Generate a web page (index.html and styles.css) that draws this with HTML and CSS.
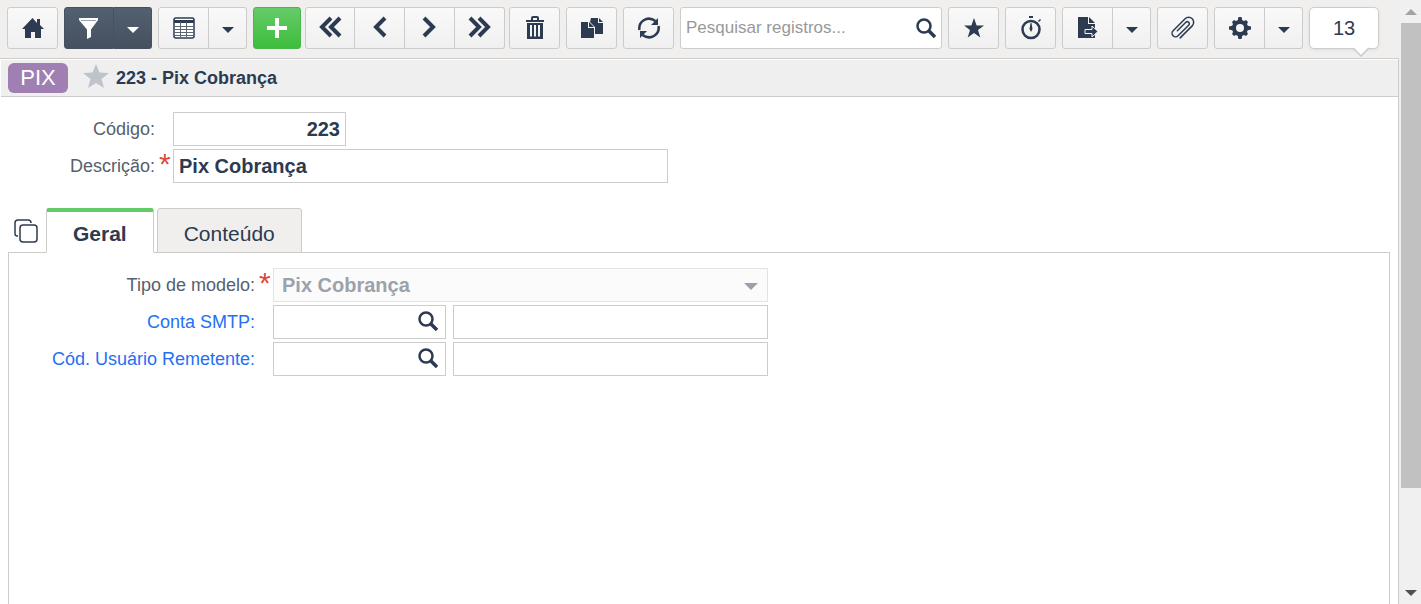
FILE: index.html
```html
<!DOCTYPE html>
<html lang="pt-BR">
<head>
  <meta charset="UTF-8">
  <meta name="viewport" content="width=device-width, initial-scale=1.0">
  <title>223 - Pix Cobrança</title>
  <link rel="stylesheet" href="styles.css">
</head>
<body>

  <div class="page">

    <!-- Toolbar -->
    <header class="toolbar">
      <div class="btn-group">
        <button class="btn" type="button" aria-label="Início">
          <svg width="22" height="22" viewBox="0 0 22 22"><path d="M10.500 1L0 12h3v9h6v-6h4v6h6v-9h3l-4-4V2h-3v4z"/></svg>
        </button>
      </div>

      <div class="btn-group dark">
        <button class="btn" type="button" aria-label="Filtro">
          <svg width="20" height="22" viewBox="0 0 20 22"><path d="M0 1h19v2L12 12.500v7.500l-4 2v-9.500L0 3z"/><path d="M2 3.500h15" stroke="#9ba3ad"/></svg>
        </button>
        <button class="btn caret" type="button" aria-label="Opções de filtro">
          <svg width="12" height="6" viewBox="0 0 12 6"><path d="M0 0h12L6 6z"/></svg>
        </button>
      </div>

      <div class="btn-group">
        <button class="btn" type="button" aria-label="Grade">
          <svg width="22" height="22" viewBox="0 0 22 22"><rect x="1" y="1" width="20" height="20" rx="2" fill="#fff" stroke="#2c3b50" stroke-width="1.500"/><path d="M1 3h20v3H1z"/><path d="M2 9.500h18M2 12.500h18M2 15.500h18M2 18.500h18M7.500 5v15M13.500 5v15" stroke="#59667a"/></svg>
        </button>
        <button class="btn caret" type="button" aria-label="Opções da grade">
          <svg width="12" height="6" viewBox="0 0 12 6"><path d="M0 0h12L6 6z"/></svg>
        </button>
      </div>

      <div class="record-actions">
        <button class="btn add" type="button" aria-label="Novo">
          <svg width="22" height="22" viewBox="0 0 22 22"><path d="M9 1h4v8h8v4h-8v8H9v-8H1V9h8z"/></svg>
        </button>

        <div class="btn-group">
          <button class="btn nav" type="button" aria-label="Primeiro">
            <svg width="24" height="22" viewBox="0 0 24 22"><path class="chevron" d="M13 2L4 11l9 9M22 2l-9 9 9 9"/></svg>
          </button>
          <button class="btn nav" type="button" aria-label="Anterior">
            <svg width="24" height="22" viewBox="0 0 24 22"><path class="chevron" d="M17 2l-9 9 9 9"/></svg>
          </button>
          <button class="btn nav" type="button" aria-label="Próximo">
            <svg width="24" height="22" viewBox="0 0 24 22"><path class="chevron" d="M6 2l9 9-9 9"/></svg>
          </button>
          <button class="btn nav" type="button" aria-label="Último">
            <svg width="24" height="22" viewBox="0 0 24 22"><path class="chevron" d="M2 2l9 9-9 9M11 2l9 9-9 9"/></svg>
          </button>
        </div>

        <button class="btn single" type="button" aria-label="Excluir">
          <svg width="18" height="24" viewBox="0 0 18 24"><path d="M5 4V2q0-2 2-2h4q2 0 2 2v2h5v2H0V4zM7 4h4V2H7zM1 7h16v16H1zM4 9v11.500h2V9zM8 9v11.500h2V9zM12 9v11.500h2V9z" fill-rule="evenodd"/></svg>
        </button>
      </div>

      <button class="btn single" type="button" aria-label="Duplicar">
        <svg width="22" height="22" viewBox="0 0 22 22"><path d="M10 1h7v5h5v11h-8V10L9 5z"/><path d="M18 1l4 4h-4z"/><path d="M0 5h7v6h6v10H0z"/><path d="M8 5l5 5H8z"/></svg>
      </button>

      <button class="btn single" type="button" aria-label="Atualizar">
        <svg width="24" height="24" viewBox="0 0 24 24"><path class="arc" d="M2.500 14C1 6 10-1 18.500 5M21.500 10C23 18 14 25 5.500 19"/><path d="M21 2v7h-7zM3 22v-7h7z"/></svg>
      </button>

      <div class="search">
        <input type="text" class="search-input" aria-label="Pesquisar registros" placeholder="Pesquisar registros...">
        <button class="search-btn" type="button" aria-label="Pesquisar">
          <svg width="20" height="20" viewBox="0 0 20 20"><circle class="lens" cx="8" cy="8" r="6.500"/><path class="handle" d="M13 13l6 6"/></svg>
        </button>
      </div>

      <button class="btn single" type="button" aria-label="Favoritos">
        <svg width="22" height="22" viewBox="0 0 22 22"><path d="M11 1l2.600 7.400H21l-6 4.600 2.300 7.500L11 16l-6.300 4.500L7 13 1 8.400h7.400z"/></svg>
      </button>

      <button class="btn single" type="button" aria-label="Tempo">
        <svg width="22" height="24" viewBox="0 0 22 24"><circle cx="11" cy="13.500" r="8.500" fill="none" stroke="#2c3b50" stroke-width="2.500"/><path d="M9 0h4v2H9zM18 5l2-2 1 1-2 2zM10.500 7h1l1 6-1.500 3L9.500 13z"/></svg>
      </button>

      <div class="btn-group">
        <button class="btn" type="button" aria-label="Exportar">
          <svg width="22" height="22" viewBox="0 0 22 22"><path d="M1 0h10v7h7v14H1z"/><path d="M12 0l6 6h-6z"/><path d="M8 12.500h7V9l6 5.500-6 5.500v-3.500H8z" stroke="#f4f4f4"/></svg>
        </button>
        <button class="btn caret" type="button" aria-label="Opções de exportação">
          <svg width="12" height="6" viewBox="0 0 12 6"><path d="M0 0h12L6 6z"/></svg>
        </button>
      </div>

      <button class="btn single" type="button" aria-label="Anexos">
        <svg width="24" height="24" viewBox="0 0 24 24"><path class="clip" transform="rotate(45 12 12)" d="M17 21V4a5 5 0 0 0-10 0v17a3.500 3.500 0 0 0 7 0V6a2 2 0 0 0-4 0v12"/></svg>
      </button>

      <div class="btn-group">
        <button class="btn" type="button" aria-label="Configurações">
          <svg width="22" height="22" viewBox="0 0 22 22"><circle cx="11" cy="11" r="6" fill="none" stroke="#2c3b50" stroke-width="4"/><path d="M9.500 0h3l1 4h-5zM9.500 22h3l1-4h-5zM0 9.500v3l4 1v-5zM22 9.500v3l-4 1v-5zM3 5l2-2 4 2-4 4zM19 5l-2-2-4 2 4 4zM3 17l2 2 4-2-4-4zM19 17l-2 2-4-2 4-4z"/></svg>
        </button>
        <button class="btn caret" type="button" aria-label="Opções de configuração">
          <svg width="12" height="6" viewBox="0 0 12 6"><path d="M0 0h12L6 6z"/></svg>
        </button>
      </div>

      <button class="counter" type="button">13
        <svg class="counter-tip" width="18" height="10" viewBox="0 0 18 10"><path d="M1 0l8 8 8-8z" fill="#fff"/><path d="M1 1l8 8 8-8" fill="none" stroke="#ccc" stroke-width="1.500"/></svg>
      </button>
    </header>

    <main class="content">

      <!-- Record title -->
      <div class="title-bar">
        <span class="badge">PIX</span>
        <svg class="favorite" width="26" height="24" viewBox="0 0 26 24"><path d="M13 0l3.500 8.500 9.500.5-7.500 6 2.500 9-8-5-8 5 2.500-9L0 9l9.500-.5z" fill="#bfc3ca"/></svg>
        <h1>223 - Pix Cobrança</h1>
      </div>

      <!-- Record fields -->
      <form class="fields">
        <div class="row">
          <label class="label" for="codigo">Código:</label>
          <span class="required"></span>
          <input type="text" id="codigo" class="input code number" value="223">
        </div>
        <div class="row">
          <label class="label" for="descricao">Descrição:</label>
          <span class="required">*</span>
          <input type="text" id="descricao" class="input wide" value="Pix Cobrança">
        </div>
      </form>

      <!-- Tabs -->
      <div class="tabs">
        <button class="tab-mode" type="button" aria-label="Modo das abas">
          <svg width="24" height="24" viewBox="0 0 24 24"><path d="M4 17C1 17 1 16 1 14V4q0-3 3-3h10q3 0 3 3" fill="none" stroke="#2c3b50" stroke-width="1.500"/><rect x="6" y="6" width="17" height="17" rx="3" fill="#fff" stroke="#2c3b50" stroke-width="1.500"/></svg>
        </button>
        <button class="tab active" type="button">Geral</button>
        <button class="tab" type="button">Conteúdo</button>
      </div>

      <form class="panel">
        <div class="row">
          <label class="label" for="tipo">Tipo de modelo:</label>
          <span class="required">*</span>
          <div class="select-box">
            <select id="tipo" class="input" disabled>
              <option>Pix Cobrança</option>
            </select>
            <svg width="14" height="7" viewBox="0 0 14 7"><path d="M0 0h14L7 7z" fill="#9ca2ac"/></svg>
          </div>
        </div>
        <div class="row">
          <label class="label link" for="smtp">Conta SMTP:</label>
          <span class="required"></span>
          <div class="lookup">
            <input type="text" id="smtp">
            <button class="search-btn" type="button" aria-label="Pesquisar conta">
              <svg width="20" height="20" viewBox="0 0 20 20"><circle class="lens" cx="8" cy="8" r="6.500"/><path class="handle" d="M13 13l6 6"/></svg>
            </button>
          </div>
          <input type="text" class="input name" aria-label="Nome da conta SMTP">
        </div>
        <div class="row">
          <label class="label link" for="usuario">Cód. Usuário Remetente:</label>
          <span class="required"></span>
          <div class="lookup">
            <input type="text" id="usuario">
            <button class="search-btn" type="button" aria-label="Pesquisar usuário">
              <svg width="20" height="20" viewBox="0 0 20 20"><circle class="lens" cx="8" cy="8" r="6.500"/><path class="handle" d="M13 13l6 6"/></svg>
            </button>
          </div>
          <input type="text" class="input name" aria-label="Nome do usuário remetente">
        </div>
      </form>

    </main>
  </div>

  <!-- Scrollbar -->
  <div class="scrollbar">
    <div class="scroll-arrow up"><svg width="12" height="6" viewBox="0 0 12 6"><path d="M0 6h12L6 0z"/></svg></div>
    <div class="scroll-thumb"></div>
    <div class="scroll-rest"></div>
    <div class="scroll-arrow"><svg width="12" height="6" viewBox="0 0 12 6"><path d="M0 0h12L6 6z"/></svg></div>
  </div>

</body>
</html>
```
FILE: styles.css
```css
/* General Reset */
* {
  margin: 0;
  padding: 0;
  box-sizing: border-box;
}

body {
  display: flex;
  min-height: 100vh;
  background-color: #f0efed;
  color: #2c3b50;
  font-family: "Liberation Sans", Arial, sans-serif;
  font-size: 18px;
}

button,
input,
select {
  font-family: inherit;
  color: inherit;
}

svg {
  display: block;
  flex-shrink: 0;
  fill: #2c3b50;
}

.page {
  flex: 1;
  display: flex;
  flex-direction: column;
  min-width: 0;
}

/* Toolbar */
.toolbar {
  display: flex;
  gap: 6px;
  padding: 7px 21px 9px 7px;
}

.btn-group {
  display: flex;
}

.record-actions {
  display: flex;
  gap: 4px;
}

.btn {
  display: flex;
  align-items: center;
  justify-content: center;
  width: 51px;
  height: 42px;
  border: 1px solid #ccc;
  border-radius: 3px;
  background: linear-gradient(#f9f9f9, #f0f0f0);
}

.btn-group .btn:not(:first-child) {
  border-left: none;
  border-top-left-radius: 0;
  border-bottom-left-radius: 0;
}

.btn-group .btn:not(:last-child) {
  border-top-right-radius: 0;
  border-bottom-right-radius: 0;
}

.btn.caret {
  width: 38px;
  padding-top: 3px;
}

.btn.nav {
  width: 50px;
  padding-bottom: 2px;
}

.dark .btn {
  width: 50px;
  border-color: #465262;
  background: linear-gradient(#536071, #45515f);
}

.dark .btn.caret {
  width: 38px;
}

.dark svg,
.add svg {
  fill: #fff;
}

.btn.add {
  width: 48px;
  border-color: #48b84b;
  background: linear-gradient(#66cb68, #3dbd3d);
}

.chevron {
  fill: none;
  stroke: #2c3b50;
  stroke-width: 4;
}

.arc {
  fill: none;
  stroke: #2c3b50;
  stroke-width: 2.5;
}

.clip {
  fill: none;
  stroke: #2c3b50;
  stroke-width: 1.5;
  stroke-linecap: round;
}

.search {
  flex: 1;
  display: flex;
  align-items: center;
  min-width: 0;
  padding: 0 5px;
  border: 1px solid #ccc;
  border-radius: 3px;
  background-color: #fff;
}

.search-input {
  flex: 1;
  min-width: 0;
  border: none;
  outline: none;
  background: none;
  font-size: 17px;
}

.search-input::placeholder {
  color: #999;
}

.search-btn {
  border: none;
  background: none;
}

.lens {
  fill: none;
  stroke: #2c3b50;
  stroke-width: 2.5;
}

.handle {
  stroke: #2c3b50;
  stroke-width: 3.5;
}

.counter {
  position: relative;
  width: 70px;
  height: 42px;
  border: 1px solid #ccc;
  border-radius: 5px;
  background-color: #fff;
  box-shadow: 0 1px 3px #ddd;
  font-size: 20px;
}

.counter-tip {
  position: absolute;
  right: 8px;
  bottom: -9px;
}

/* Record */
.content {
  flex: 1;
  display: flex;
  flex-direction: column;
  margin-right: 1px;
  border-top: 1px solid #ccc;
  border-right: 1px solid #ccc;
  background-color: #fff;
}

.title-bar {
  display: flex;
  align-items: center;
  height: 37px;
  margin: 1px 0 0 1px;
  padding-left: 7px;
  border-bottom: 1px solid #ccc;
  background-color: #efefef;
}

.badge {
  width: 60px;
  margin-right: 15px;
  border-radius: 6px;
  background-color: #a07fb2;
  color: #fff;
  font-size: 22px;
  line-height: 30px;
  text-align: center;
}

.favorite {
  align-self: flex-start;
  margin-top: 4px;
}

.title-bar h1 {
  margin-left: 7px;
  font-size: 18px;
}

/* Fields */
.fields {
  display: flex;
  flex-direction: column;
  gap: 3px;
  padding: 15px 0 25px;
}

.row {
  display: flex;
  align-items: center;
}

.label {
  flex-shrink: 0;
  width: 155px;
  color: #56606e;
  text-align: right;
}

.label.link {
  color: #256ff5;
}

.required {
  flex-shrink: 0;
  width: 18px;
  height: 34px;
  padding-left: 4px;
  color: #dd4b39;
  font-size: 30px;
  line-height: 30px;
}

.input,
.lookup {
  height: 34px;
  border: 1px solid #ccc;
  background-color: #fff;
  font-size: 20px;
  font-weight: bold;
}

.input {
  padding: 0 5px;
}

.code,
.lookup {
  width: 173px;
}

.number {
  text-align: right;
}

.wide,
.select-box {
  width: 495px;
}

.name {
  width: 315px;
  margin-left: 7px;
}

.lookup {
  display: flex;
  align-items: center;
  padding: 0 7px 3px 5px;
}

.lookup input {
  flex: 1;
  min-width: 0;
  border: none;
  outline: none;
  font-size: 20px;
}

.select-box {
  position: relative;
}

.select-box select {
  display: block;
  width: 100%;
  padding-left: 8px;
  border-color: #e3e3e3;
  background-color: #fbfbfb;
  color: #9ca2ac;
  opacity: 1;
  appearance: none;
}

.select-box svg {
  position: absolute;
  top: 15px;
  right: 10px;
}

/* Tabs */
.tabs {
  display: flex;
  align-items: flex-end;
  gap: 3px;
  margin-bottom: -1px;
  padding-left: 14px;
  z-index: 1;
}

.tab-mode {
  margin: 0 5px 10px 0;
  border: none;
  background: none;
}

.tab {
  height: 45px;
  padding: 6px 26px 0;
  border: 1px solid #ccc;
  border-radius: 3px 3px 0 0;
  background-color: #f1efee;
  font-size: 21px;
}

.tab.active {
  padding-top: 3px;
  border-top: 4px solid #63cb66;
  border-bottom-color: #fff;
  background-color: #fff;
  font-weight: bold;
}

.panel {
  flex: 1;
  display: flex;
  flex-direction: column;
  gap: 3px;
  margin: 0 8px;
  padding-top: 15px;
  border: 1px solid #ccc;
  border-bottom: none;
}

.panel .label {
  width: 246px;
}

/* Scrollbar */
.scrollbar {
  display: flex;
  flex-direction: column;
  width: 21px;
  padding-left: 1px;
  background-color: #f0f0f0;
}

.scroll-arrow {
  display: flex;
  align-items: center;
  justify-content: center;
  height: 23px;
}

.scroll-arrow svg {
  fill: #505050;
}

.scroll-arrow.up svg {
  fill: #a3a3a3;
}

.scroll-thumb {
  flex: 5;
  background-color: #c1c1c1;
}

.scroll-rest {
  flex: 1;
}
```
